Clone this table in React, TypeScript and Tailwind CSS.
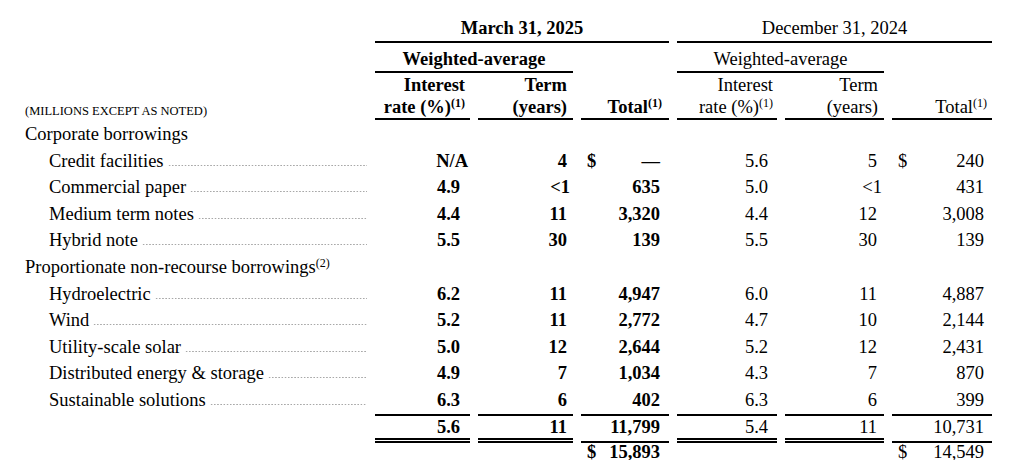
import React from "react";

type Vals = [string, string, string];
type Row = { label: string; m: Vals; d: Vals; dollar?: boolean };

const corporate: Row[] = [
  { label: "Credit facilities", m: ["N/A", "4", "—"], d: ["5.6", "5", "240"], dollar: true },
  { label: "Commercial paper", m: ["4.9", "<1", "635"], d: ["5.0", "<1", "431"] },
  { label: "Medium term notes", m: ["4.4", "11", "3,320"], d: ["4.4", "12", "3,008"] },
  { label: "Hybrid note", m: ["5.5", "30", "139"], d: ["5.5", "30", "139"] },
];

const nonRecourse: Row[] = [
  { label: "Hydroelectric", m: ["6.2", "11", "4,947"], d: ["6.0", "11", "4,887"] },
  { label: "Wind", m: ["5.2", "11", "2,772"], d: ["4.7", "10", "2,144"] },
  { label: "Utility-scale solar", m: ["5.0", "12", "2,644"], d: ["5.2", "12", "2,431"] },
  { label: "Distributed energy & storage", m: ["4.9", "7", "1,034"], d: ["4.3", "7", "870"] },
  { label: "Sustainable solutions", m: ["6.3", "6", "402"], d: ["6.3", "6", "399"] },
];

function Label({ text }: { text: string }) {
  return (
    <div className="flex items-baseline pl-[49px] leading-[26.6px]">
      <span className="whitespace-nowrap">{text}</span>
      {/* dot leader */}
      <span className="ml-[4px] h-[3px] min-w-0 flex-1 bg-[radial-gradient(circle,#a8a8a8_0.6px,transparent_1px)] bg-[length:3.2px_3px] bg-repeat-x" />
    </div>
  );
}

function DataRow({ row, last }: { row: Row; last?: boolean }) {
  const line = last ? "border-b-2 border-black" : "";
  return (
    <>
      <Label text={row.label} />
      <div className={`${line} text-right font-bold leading-[26.6px] ${row.m[0] === "N/A" ? "pr-[2px]" : "pr-[10px]"}`}>
        {row.m[0]}
      </div>
      <div className={`${line} text-right font-bold leading-[26.6px] ${row.m[1] === "<1" ? "pr-[3px]" : "pr-[6px]"}`}>
        {row.m[1]}
      </div>
      <div className={`${line} flex justify-between font-bold leading-[26.6px] pl-[6px] pr-[9px]`}>
        <span>{row.dollar ? "$" : ""}</span>
        <span>{row.m[2]}</span>
      </div>
      <div className={`${line} text-right leading-[26.6px] pr-[9px]`}>{row.d[0]}</div>
      <div className={`${line} text-right leading-[26.6px] ${row.d[1] === "<1" ? "pr-[2px]" : "pr-[7px]"}`}>
        {row.d[1]}
      </div>
      <div className={`${line} flex justify-between leading-[26.6px] pl-[6px] pr-[8px]`}>
        <span>{row.dollar ? "$" : ""}</span>
        <span>{row.d[2]}</span>
      </div>
    </>
  );
}

export default function App() {
  return (
    <div className="h-[460px] w-[1009px] overflow-hidden bg-white text-black font-[family-name:Liberation_Serif,Times_New_Roman,serif] text-[18.5px]">
      <div className="grid grid-cols-[367px_95px_95px_88px_100px_99px_100px] gap-x-2">
        {/* header: dates */}
        <div />
        <div className="col-span-3 border-b-2 border-black pt-[15px] text-center font-bold leading-[26px]">
          March 31, 2025
        </div>
        <div className="col-span-3 border-b-2 border-black pt-[15px] text-center leading-[26px]">
          December 31, 2024
        </div>

        {/* header: weighted-average */}
        <div />
        <div className="col-span-2 border-b-2 border-black pt-[4px] text-center font-bold leading-[24px]">
          Weighted-average
        </div>
        <div />
        <div className="col-span-2 border-b-2 border-black pt-[4px] text-center leading-[24px]">
          Weighted-average
        </div>
        <div />

        {/* header: column titles */}
        <div className="flex items-end pb-[2px] pl-[25px] text-[12.5px] leading-[14px]">
          (MILLIONS EXCEPT AS NOTED)
        </div>
        <div className="border-b-2 border-black pt-[1px] pr-[5px] text-right font-bold leading-[22px]">
          Interest
          <br />
          rate (%)<sup className="text-[12px]">(1)</sup>
        </div>
        <div className="border-b-2 border-black pt-[1px] pr-[6px] text-right font-bold leading-[22px]">
          Term
          <br />
          (years)
        </div>
        <div className="flex items-end justify-end border-b-2 border-black pr-[7px] font-bold leading-[22px]">
          <span>
            Total<sup className="text-[12px]">(1)</sup>
          </span>
        </div>
        <div className="border-b-2 border-black pt-[1px] pr-[4px] text-right leading-[22px]">
          Interest
          <br />
          rate (%)<sup className="text-[12px]">(1)</sup>
        </div>
        <div className="border-b-2 border-black pt-[1px] pr-[6px] text-right leading-[22px]">
          Term
          <br />
          (years)
        </div>
        <div className="flex items-end justify-end border-b-2 border-black pr-[5px] leading-[22px]">
          <span>
            Total<sup className="text-[12px]">(1)</sup>
          </span>
        </div>

        {/* corporate borrowings */}
        <div className="col-span-7 pl-[25px] pt-[1px] leading-[26.6px]">Corporate borrowings</div>
        {corporate.map((r) => (
          <DataRow key={r.label} row={r} />
        ))}

        {/* non-recourse */}
        <div className="col-span-7 pl-[25px] leading-[26.6px]">
          Proportionate non-recourse borrowings<sup className="text-[12px]">(2)</sup>
        </div>
        {nonRecourse.map((r, i) => (
          <DataRow key={r.label} row={r} last={i === nonRecourse.length - 1} />
        ))}

        {/* totals */}
        <div />
        <div className="border-b-[5px] border-double border-black pr-[10px] text-right font-bold leading-[22px]">5.6</div>
        <div className="border-b-[5px] border-double border-black pr-[6px] text-right font-bold leading-[22px]">11</div>
        <div className="border-b-2 border-black pr-[9px] text-right font-bold leading-[22px]">11,799</div>
        <div className="border-b-[5px] border-double border-black pr-[9px] text-right leading-[22px]">5.4</div>
        <div className="border-b-[5px] border-double border-black pr-[7px] text-right leading-[22px]">11</div>
        <div className="border-b-2 border-black pr-[8px] text-right leading-[22px]">10,731</div>

        {/* grand total */}
        <div className="col-span-3" />
        <div className="flex justify-between pl-[6px] pr-[9px] font-bold leading-[18px]">
          <span>$</span>
          <span>15,893</span>
        </div>
        <div className="col-span-2" />
        <div className="flex justify-between pl-[6px] pr-[8px] leading-[18px]">
          <span>$</span>
          <span>14,549</span>
        </div>
      </div>
    </div>
  );
}
